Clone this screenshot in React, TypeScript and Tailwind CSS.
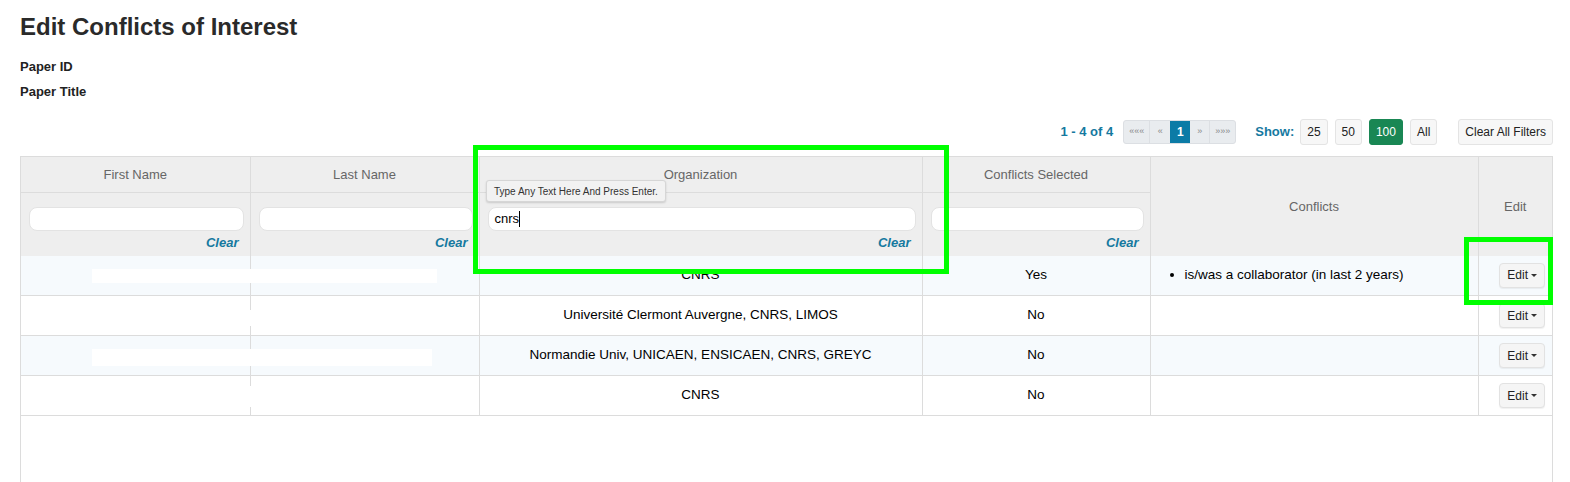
import React from "react";

const FONT = { fontFamily: '"Liberation Sans", Arial, sans-serif' };

const ROWS = [
  { org: "CNRS", sel: "Yes", conflicts: ["is/was a collaborator (in last 2 years)"], stripe: true },
  { org: "Université Clermont Auvergne, CNRS, LIMOS", sel: "No", conflicts: [], stripe: false },
  { org: "Normandie Univ, UNICAEN, ENSICAEN, CNRS, GREYC", sel: "No", conflicts: [], stripe: true },
  { org: "CNRS", sel: "No", conflicts: [], stripe: false },
];

function Filter({ value, caret }: { value?: string; caret?: boolean }) {
  return (
    <div className="flex flex-col pt-[14px] pb-[5px] pl-[8px] pr-[6px]">
      <div className="h-[24px] rounded-[8px] border border-[#e3e3e3] bg-white flex items-center px-[6px] text-[13px] text-black">
        {value}
        {caret && <span className="inline-block w-px h-[16px] bg-black" />}
      </div>
      <a className="self-end mt-[4px] mr-[5px] text-[13px] italic font-bold text-[#15799f] leading-[16px]">Clear</a>
    </div>
  );
}

function EditBtn() {
  return (
    <button className="h-[25px] px-[7px] rounded-[4px] border border-[#e2e2e2] bg-[#f5f5f5] text-[12px] text-[#222] flex items-center gap-[3px] shadow-[0_1px_1px_rgba(0,0,0,0.06)]">
      Edit
      <span className="inline-block w-0 h-0 border-l-[3px] border-r-[3px] border-t-[3px] border-l-transparent border-r-transparent border-t-[#333]" />
    </button>
  );
}

function SmallBtn({ label, active }: { label: string; active?: boolean }) {
  return (
    <button
      className={`h-[26px] px-[6px] rounded-[3px] text-[12px] border ${
        active ? "bg-[#198754] border-[#198754] text-white" : "bg-[#f7f7f7] border-[#e4e4e4] text-[#222]"
      }`}
    >
      {label}
    </button>
  );
}

export default function App() {
  return (
    <div className="relative w-[1570px] h-[482px] overflow-hidden bg-white text-[#222]" style={FONT}>
      <div className="pl-[20px] pr-[17px] pt-[12px]">
        <h1 className="text-[24px] leading-[30px] font-bold text-[#2a2a2a]">Edit Conflicts of Interest</h1>
        <div className="mt-[15px] text-[13px] leading-[20px] font-bold">Paper ID</div>
        <div className="mt-[5px] text-[13px] leading-[20px] font-bold">Paper Title</div>

        <div className="mt-[17px] flex items-center justify-end h-[26px]">
          <span className="text-[13px] font-bold text-[#15799f]">1 - 4 of 4</span>
          <div className="ml-[10px] flex h-[24px] rounded-[3px] border border-[#dcdfe3] bg-[#e9ecef] overflow-hidden text-[9px] text-[#888]">
            <span className="w-[26px] flex items-center justify-center border-r border-[#dcdfe3]">«««</span>
            <span className="w-[20px] flex items-center justify-center">«</span>
            <span className="w-[20px] flex items-center justify-center bg-[#0c7ba6] text-white text-[12px] font-bold">1</span>
            <span className="w-[20px] flex items-center justify-center border-r border-[#dcdfe3]">»</span>
            <span className="w-[25px] flex items-center justify-center">»»»</span>
          </div>
          <span className="ml-[19px] mr-[6px] text-[13px] font-bold text-[#15799f]">Show:</span>
          <div className="flex gap-[7px]">
            <SmallBtn label="25" />
            <SmallBtn label="50" />
            <SmallBtn label="100" active />
            <SmallBtn label="All" />
          </div>
          <div className="ml-[21px]">
            <SmallBtn label="Clear All Filters" />
          </div>
        </div>

        <div className="mt-[11px] border-l border-r border-t border-[#dcdcdc] h-[400px]">
          <table className="w-full table-fixed border-collapse text-[13px]">
            <colgroup>
              <col className="w-[229px]" />
              <col className="w-[229px]" />
              <col className="w-[443px]" />
              <col className="w-[228px]" />
              <col className="w-[328px]" />
              <col />
            </colgroup>
            <thead className="bg-[#eeeeee] text-[#666]">
              <tr className="h-[35px]">
                <th className="font-normal border-r border-b border-[#dcdcdc]">First Name</th>
                <th className="font-normal border-r border-b border-[#dcdcdc]">Last Name</th>
                <th className="font-normal border-r border-b border-[#dcdcdc]">Organization</th>
                <th className="font-normal border-r border-b border-[#dcdcdc]">Conflicts Selected</th>
                <th rowSpan={2} className="font-normal border-r border-[#dcdcdc]">Conflicts</th>
                <th rowSpan={2} className="font-normal">Edit</th>
              </tr>
              <tr className="h-[63px]">
                <th className="font-normal border-r border-[#dcdcdc] p-0"><Filter /></th>
                <th className="font-normal border-r border-[#dcdcdc] p-0"><Filter /></th>
                <th className="font-normal border-r border-[#dcdcdc] p-0"><Filter value="cnrs" caret /></th>
                <th className="font-normal border-r border-[#dcdcdc] p-0"><Filter /></th>
              </tr>
            </thead>
            <tbody className="text-black text-[13.5px]">
              {ROWS.map((r, i) => (
                <tr key={i} className={`h-[40px] border-b border-[#dcdcdc] ${r.stripe ? "bg-[#f6fafd]" : "bg-white"}`}>
                  <td className="border-r border-[#dcdcdc]" />
                  <td className="border-r border-[#dcdcdc]" />
                  <td className="border-r border-[#dcdcdc] text-center">{r.org}</td>
                  <td className="border-r border-[#dcdcdc] text-center">{r.sel}</td>
                  <td className="border-r border-[#dcdcdc] pl-[18px]">
                    {r.conflicts.length > 0 && (
                      <ul className="list-disc pl-[16px]">
                        {r.conflicts.map((c) => (
                          <li key={c}>{c}</li>
                        ))}
                      </ul>
                    )}
                  </td>
                  <td>
                    <div className="flex justify-end pr-[7px]">
                      <EditBtn />
                    </div>
                  </td>
                </tr>
              ))}
            </tbody>
          </table>
        </div>
      </div>

      {/* redactions */}
      <div className="absolute left-[92px] top-[269px] w-[345px] h-[14px] bg-white" />
      <div className="absolute left-[92px] top-[349px] w-[340px] h-[17px] bg-white" />
      <div className="absolute left-[249px] top-[310px] w-[2px] h-[16px] bg-white" />
      <div className="absolute left-[249px] top-[386px] w-[2px] h-[21px] bg-white" />

      {/* tooltip */}
      <div className="absolute left-[486px] top-[180px] h-[22px] px-[7px] flex items-center rounded-[3px] border border-[#d6d6d6] bg-[#f2f2f2] text-[10px] text-[#333] shadow-[0_1px_2px_rgba(0,0,0,0.15)]">
        Type Any Text Here And Press Enter.
      </div>

      {/* annotation boxes */}
      <div className="absolute left-[473px] top-[145px] w-[476px] h-[129px] border-[5px] border-[#00ff00]" />
      <div className="absolute left-[1464px] top-[237px] w-[89px] h-[68px] border-[5px] border-[#00ff00]" />
    </div>
  );
}
